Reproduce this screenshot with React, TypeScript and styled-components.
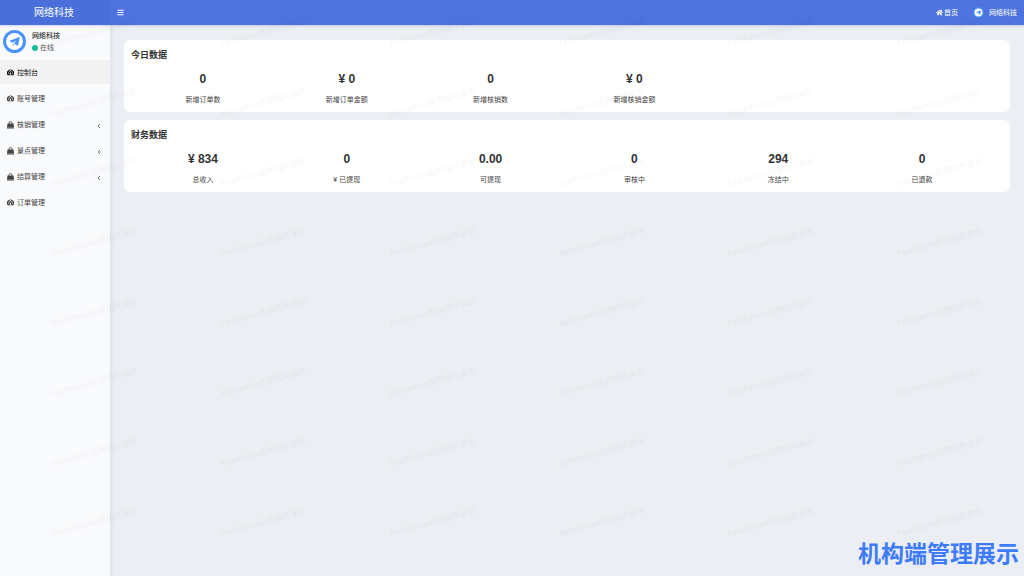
import React from "react";
import styled, { createGlobalStyle } from "styled-components";
import { FaBars, FaHome } from "react-icons/fa";

const GlobalStyle = createGlobalStyle`
  * { box-sizing: border-box; }
  body {
    margin: 0;
    background: #ebeef3;
    color: #333;
    font-family: "Liberation Sans", "Noto Sans CJK SC", sans-serif;
    font-size: 7px;
    line-height: 12px;
  }
  a { color: inherit; text-decoration: none; }
  button { border: 0; padding: 0; background: none; color: inherit; font: inherit; cursor: pointer; }
  h2, p, ul, dl, dd { margin: 0; padding: 0; }
`;

const Page = styled.div`
  position: relative;
  min-height: 100vh;
  display: flex;
  flex-direction: column;
  overflow: hidden;
`;

const Header = styled.header`
  display: flex;
  align-items: center;
  height: 25px;
  background: #4e73df;
  color: #fff;
  box-shadow: 0 1px 2px rgba(60, 90, 170, 0.25);
  z-index: 1;
`;

const Brand = styled.a`
  width: 110px;
  flex: none;
  padding-right: 2px;
  text-align: center;
  font-size: 10px;
  line-height: 25px;
  background: #4a6fdb;
`;

const MenuToggle = styled.button`
  display: flex;
  padding: 6px 7px;
`;

const HeaderLinks = styled.nav`
  display: flex;
  align-items: center;
  gap: 15px;
  margin-left: auto;
  padding-right: 7px;
`;

const HeaderLink = styled.a<{ $gap: number }>`
  display: flex;
  align-items: center;
  gap: ${(p) => p.$gap}px;
`;

const Body = styled.div`
  display: flex;
  flex: 1;
`;

const Sidebar = styled.aside`
  width: 110px;
  flex: none;
  background: #f9fafc;
  box-shadow: 1px 0 6px rgba(40, 60, 90, 0.08);
`;

const Profile = styled.div`
  display: flex;
  gap: 6px;
  height: 35px;
  padding: 5px 3px;
`;

const ProfileName = styled.p`
  font-weight: 500;
`;

const Status = styled.p`
  display: flex;
  align-items: center;
  gap: 2px;
  color: #555;

  &::before {
    content: "";
    width: 6px;
    height: 6px;
    border-radius: 50%;
    background: #18bc9c;
  }
`;

const Menu = styled.ul`
  list-style: none;
  display: flex;
  flex-direction: column;
  gap: 2px;
`;

const MenuLink = styled.a<{ $active?: boolean }>`
  display: flex;
  align-items: center;
  gap: 3px;
  height: 24px;
  padding: 1px 9px 0 7px;
  background: ${(p) => (p.$active ? "#f2f2f2" : "transparent")};
  color: ${(p) => (p.$active ? "#111" : "#444")};
`;

const Arrow = styled.span`
  display: flex;
  margin-left: auto;
  padding-top: 3px;
`;

const Content = styled.main`
  flex: 1;
  min-width: 0;
  display: flex;
  flex-direction: column;
  gap: 8px;
  padding: 15px 14px;
`;

const Card = styled.section`
  min-height: 72px;
  padding: 8px 16px 6px 7px;
  border-radius: 6px;
  background: #fff;
`;

const CardTitle = styled.h2`
  font-size: 9px;
  line-height: 14px;
  font-weight: 700;
`;

const Stats = styled.dl`
  display: grid;
  grid-template-columns: repeat(6, 1fr);
  padding-top: 9px;
  text-align: center;
`;

const Stat = styled.div`
  display: flex;
  flex-direction: column-reverse;
  gap: 7px;
`;

const StatLabel = styled.dt`
  color: #444;
`;

const StatValue = styled.dd`
  font-size: 12px;
  line-height: 16px;
  font-weight: 700;
`;

const Caption = styled.p`
  position: absolute;
  right: 5px;
  bottom: 8px;
  color: #3d7bfb;
  font-family: "Noto Sans CJK SC", sans-serif;
  font-size: 23px;
  line-height: 32px;
  font-weight: 700;
`;

const Watermark = styled.div`
  position: absolute;
  inset: 0;
  z-index: 2;
  display: grid;
  grid-template-columns: repeat(auto-fill, 169px);
  grid-auto-rows: 70px;
  padding-left: 10px;
  overflow: hidden;
  pointer-events: none;
  color: #000;
  opacity: 0.03;
  font-family: "Noto Sans", "Noto Sans CJK SC", sans-serif;
  font-size: 8px;
  line-height: 16px;
  text-align: center;
`;

const Mark = styled.span`
  padding-top: 24px;

  span {
    display: block;
    transform: rotate(-15deg);
  }
`;

const Avatar = ({ size, ring }: { size: number; ring: string }) => (
  <svg width={size} height={size} viewBox="0 0 24 24" aria-hidden="true">
    <circle cx="12" cy="12" r="12" fill={ring} />
    <circle cx="12" cy="12" r="8.8" fill="#fff" />
    <path d="M17.5 7 6.5 11.6l4 1.6 3.4-2.4-2.2 3.2 4 2.8z" fill="#4a93fb" />
    <path d="m10.400 14 .4 2.600 1.200-1.400z" fill="#4a93fb" />
  </svg>
);

const DashboardIcon = () => (
  <svg width="7" height="7" viewBox="0 0 14 14" fill="currentColor" aria-hidden="true">
    <path
      fillRule="evenodd"
      d="M7 1a7 7 0 0 0-6 11c.2.5.4.7.8.7h10.4c.4 0 .6-.2.8-.7A7 7 0 0 0 7 1zM2 7h2v2H2zM3.600 3.600h1.800v1.800H3.600zM6.200 2h1.700v2H6.200zM8.800 3.600h1.800v1.800H8.800zM10 7h2v2h-2zM6.600 5.600h.9l-.1 3a1.600 1.600 0 1 1-1 0z"
    />
  </svg>
);

const BagIcon = () => (
  <svg width="7" height="8" viewBox="0 0 14 16" fill="currentColor" aria-hidden="true">
    <path d="M1 5h12l1 7.5H0zM0 13h14v2H0z" />
    <path d="M4 6V4a3 3 0 0 1 6 0v2" fill="none" stroke="currentColor" strokeWidth="1.6" />
  </svg>
);

const AngleIcon = () => (
  <svg width="4" height="6" viewBox="0 0 4 6" fill="none" stroke="currentColor" aria-hidden="true">
    <path d="M3 1 1 3l2 2" strokeWidth="0.7" />
  </svg>
);

const menuItems = [
  { label: "控制台", icon: DashboardIcon, active: true },
  { label: "账号管理", icon: DashboardIcon },
  { label: "核销管理", icon: BagIcon, nested: true },
  { label: "景点管理", icon: BagIcon, nested: true },
  { label: "结算管理", icon: BagIcon, nested: true },
  { label: "订单管理", icon: DashboardIcon },
];

const panels = [
  {
    title: "今日数据",
    stats: [
      ["0", "新增订单数"],
      ["¥ 0", "新增订单金额"],
      ["0", "新增核销数"],
      ["¥ 0", "新增核销金额"],
    ],
  },
  {
    title: "财务数据",
    stats: [
      ["¥ 834", "总收入"],
      ["0", "¥ 已提现"],
      ["0.00", "可提现"],
      ["0", "审核中"],
      ["294", "冻结中"],
      ["0", "已退款"],
    ],
  },
];

export default function App() {
  return (
    <Page>
      <GlobalStyle />
      <Header>
        <Brand href="#">网络科技</Brand>
        <MenuToggle type="button" aria-label="菜单">
          <FaBars size={7} />
        </MenuToggle>
        <HeaderLinks>
          <HeaderLink href="#" $gap={1}>
            <FaHome size={7} />
            首页
          </HeaderLink>
          <HeaderLink href="#" $gap={5}>
            <Avatar size={11} ring="#3f8dfb" />
            网络科技
          </HeaderLink>
        </HeaderLinks>
      </Header>
      <Body>
        <Sidebar>
          <Profile>
            <Avatar size={23} ring="#4a93fb" />
            <div>
              <ProfileName>网络科技</ProfileName>
              <Status>在线</Status>
            </div>
          </Profile>
          <Menu>
            {menuItems.map(({ label, icon: Icon, active, nested }) => (
              <li key={label}>
                <MenuLink href="#" $active={active}>
                  <Icon />
                  {label}
                  {nested && (
                    <Arrow>
                      <AngleIcon />
                    </Arrow>
                  )}
                </MenuLink>
              </li>
            ))}
          </Menu>
        </Sidebar>
        <Content>
          {panels.map((panel) => (
            <Card key={panel.title}>
              <CardTitle>{panel.title}</CardTitle>
              <Stats>
                {panel.stats.map(([value, label]) => (
                  <Stat key={label}>
                    <StatLabel>{label}</StatLabel>
                    <StatValue>{value}</StatValue>
                  </Stat>
                ))}
              </Stats>
            </Card>
          ))}
        </Content>
      </Body>
      <Caption>机构端管理展示</Caption>
      <Watermark aria-hidden="true">
        {Array.from({ length: 48 }, (_, i) => (
          <Mark key={i}>
            <span>FastAdmin应用插件演示</span>
          </Mark>
        ))}
      </Watermark>
    </Page>
  );
}
